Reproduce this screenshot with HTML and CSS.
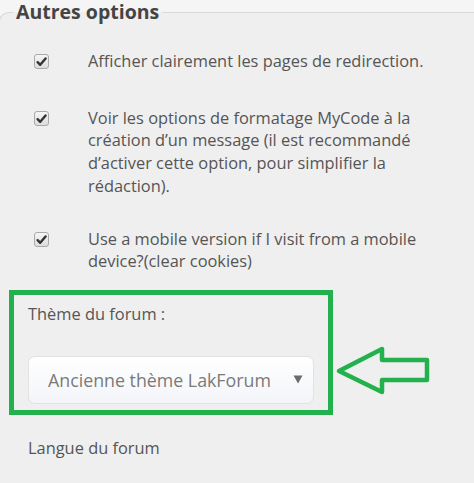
FILE: index.html
```html
<!DOCTYPE html>
<html lang="fr">
<head>
<meta charset="utf-8">
<title>Autres options</title>
<link rel="stylesheet" href="styles.css">
</head>
<body>
<fieldset class="panel">
  <legend class="panel-title">Autres options</legend>

  <div class="opt opt-first">
    <span class="check"><svg viewBox="0 0 15 15" width="15" height="15"><path d="M3.6 8.2 L6.2 10.8 L11.6 4.4" fill="none" stroke="#333" stroke-width="2.4" stroke-linecap="round" stroke-linejoin="round"/></svg></span>
    <p class="opt-text">Afficher clairement les pages de redirection.</p>
  </div>

  <div class="opt opt-second">
    <span class="check"><svg viewBox="0 0 15 15" width="15" height="15"><path d="M3.6 8.2 L6.2 10.8 L11.6 4.4" fill="none" stroke="#333" stroke-width="2.4" stroke-linecap="round" stroke-linejoin="round"/></svg></span>
    <p class="opt-text">Voir les options de formatage MyCode à la création d’un message (il est recommandé d’activer cette option, pour simplifier la rédaction).</p>
  </div>

  <div class="opt opt-third">
    <span class="check"><svg viewBox="0 0 15 15" width="15" height="15"><path d="M3.6 8.2 L6.2 10.8 L11.6 4.4" fill="none" stroke="#333" stroke-width="2.4" stroke-linecap="round" stroke-linejoin="round"/></svg></span>
    <p class="opt-text">Use a mobile version if I visit from a mobile device?(clear cookies)</p>
  </div>

  <div class="highlight">
    <p class="field-label">Thème du forum :</p>
    <div class="select">
      <span class="select-value">Ancienne thème LakForum</span>
      <svg class="select-caret" viewBox="0 0 10 9" width="10" height="9"><polygon points="0.5,0.5 9.5,0.5 5,8.5" fill="#6b6b6b"/></svg>
    </div>
    <svg class="pointer" viewBox="0 0 104 56" width="104" height="56"><polygon points="7,28 50,6 50,17 95,17 95,37 50,37 50,49" fill="none" stroke="#22b14c" stroke-width="4.5" stroke-linejoin="round"/></svg>
  </div>

  <p class="field-label field-label-next">Langue du forum</p>
</fieldset>
</body>
</html>
```

FILE: styles.css
```css
html, body {
  margin: 0;
  padding: 0;
}
body {
  background: #f5f5f5;
  font-family: "Open Sans", "Liberation Sans", sans-serif;
  color: #555;
  height: 483px;
  overflow: hidden;
}
.panel {
  margin: 0 -20px 0 -1px;
  padding: 0;
  border: 1px solid #d9d9d9;
  border-bottom: none;
  border-radius: 10px 10px 0 0;
  background: #efefef;
  height: 483px;
  box-sizing: border-box;
}
.panel-title {
  margin-left: 13px;
  padding: 0 3px;
  font-size: 19.5px;
  line-height: 24px;
  font-weight: 700;
  color: #444;
}
.opt {
  display: flex;
  align-items: flex-start;
  padding-left: 34px;
}
.opt-first { margin-top: 26px; }
.opt-second { margin-top: 34px; }
.opt-third { margin-top: 30px; }
.check {
  flex: none;
  width: 15px;
  height: 15px;
  margin-top: 4px;
  box-sizing: border-box;
  border: 1px solid #a9a9a9;
  border-radius: 3px;
  background: linear-gradient(#f6f6f6, #dcdcdc);
  display: flex;
  align-items: center;
  justify-content: center;
}
.check svg {
  display: block;
  margin: -1px;
}
.opt-text {
  margin: 0 0 0 39px;
  width: 352px;
  font-size: 16.4px;
  line-height: 22.7px;
}
.highlight {
  position: relative;
  margin: 17px 0 0 9px;
  width: 324px;
  box-sizing: border-box;
  border: 5px solid #22b14c;
  padding: 7px 14px 6px 14px;
}
.field-label {
  margin: 0;
  font-size: 16.4px;
  line-height: 23px;
}
.select {
  margin-top: 31px;
  height: 48px;
  box-sizing: border-box;
  border: 1px solid #e2e2e2;
  border-radius: 7px;
  background: linear-gradient(#ffffff, #f3f5f9);
  display: flex;
  align-items: center;
  justify-content: space-between;
  padding: 0 10px 0 19px;
}
.select-value {
  font-size: 17.8px;
  color: #7a7a7a;
}
.select-caret {
  display: block;
}
.pointer {
  position: absolute;
  left: 318px;
  top: 48px;
}
.field-label-next {
  margin: 21px 0 0 28px;
}
```
